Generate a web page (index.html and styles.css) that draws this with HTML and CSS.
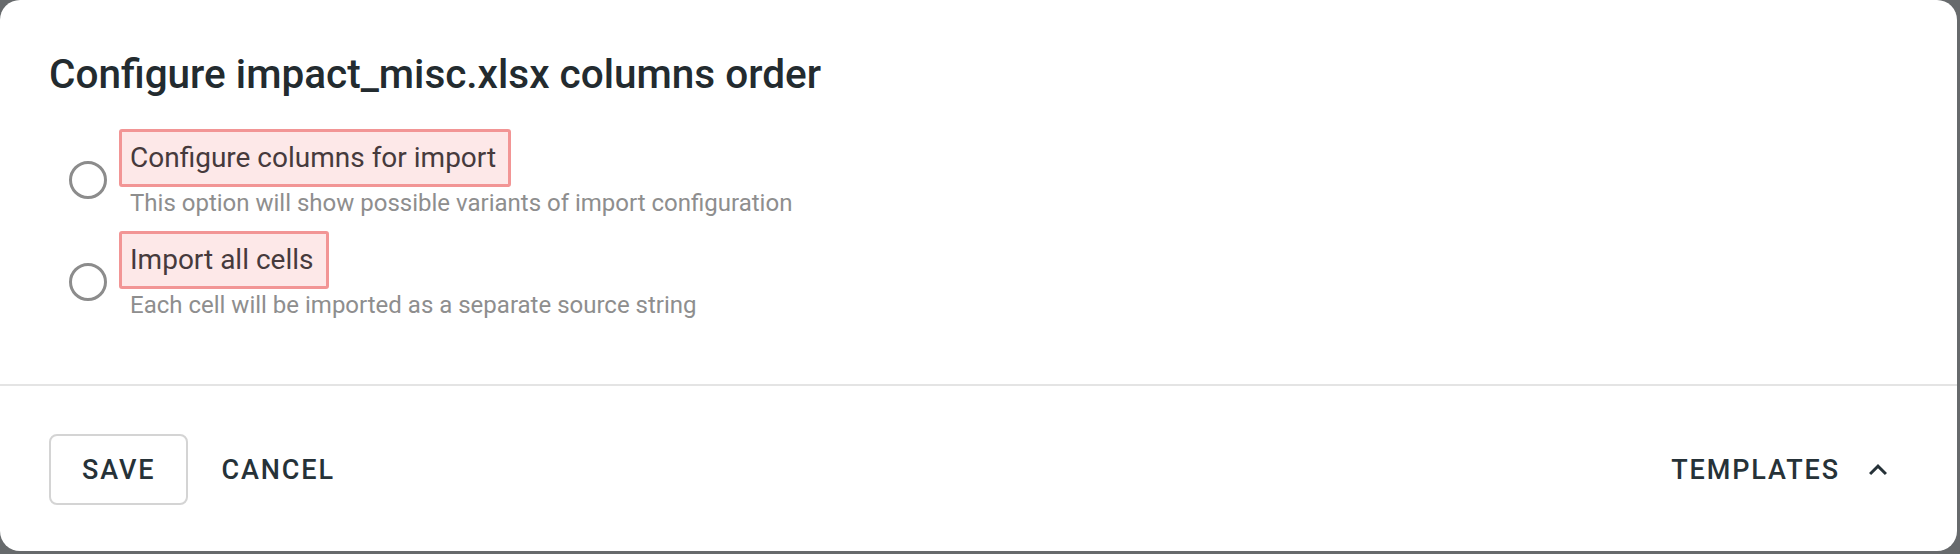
FILE: index.html
```html
<!DOCTYPE html>
<html lang="en">

<head>
    <meta charset="UTF-8">
    <meta name="viewport" content="width=device-width, initial-scale=1.0">
    <title>Configure columns order</title>
    <link rel="stylesheet" href="styles.css">
</head>

<body>
    <div class="dialog">
        <h2 class="dialog-title">Configure impact_misc.xlsx columns order</h2>
        <div class="options">
            <label class="option">
                <span class="radio"></span>
                <span class="option-text">
                    <span class="option-label">Configure columns for import</span>
                    <span class="option-hint">This option will show possible variants of import configuration</span>
                </span>
            </label>
            <label class="option">
                <span class="radio"></span>
                <span class="option-text">
                    <span class="option-label">Import all cells</span>
                    <span class="option-hint">Each cell will be imported as a separate source string</span>
                </span>
            </label>
        </div>
        <div class="dialog-actions">
            <div class="actions-left">
                <button type="button" class="btn btn-outlined">Save</button>
                <button type="button" class="btn">Cancel</button>
            </div>
            <button type="button" class="btn btn-templates">
                Templates
                <svg class="chevron" viewBox="0 0 24 24" width="36" height="36">
                    <path d="M12 8l-6 6 1.41 1.41L12 10.83l4.59 4.58L18 14z" fill="#263238"/>
                </svg>
            </button>
        </div>
    </div>
</body>

</html>
```

FILE: styles.css
```css
body {
    font-family: Roboto, "Liberation Sans", sans-serif;
    margin: 0;
    padding: 0;
    background-color: #676a6c;
    width: 1960px;
    height: 554px;
}

.dialog {
    width: 1957px;
    height: 551px;
    box-sizing: border-box;
    background: #fff;
    border-radius: 20px;
    padding-top: 50px;
}

.dialog-title {
    margin: 0 0 31px 49px;
    font-size: 40.5px;
    line-height: 48px;
    font-weight: 500;
    color: #232b2f;
}

.options {
    display: flex;
    flex-direction: column;
    gap: 12px;
    padding-left: 69px;
    padding-bottom: 63px;
    border-bottom: 2px solid #e4e4e4;
}

.option {
    display: flex;
    align-items: center;
    gap: 12px;
    cursor: pointer;
}

.radio {
    width: 38px;
    height: 38px;
    box-sizing: border-box;
    border: 3px solid #8c8c8c;
    border-radius: 50%;
    margin-top: 12px;
}

.option-text {
    display: flex;
    flex-direction: column;
    align-items: flex-start;
}

.option-label {
    height: 58px;
    box-sizing: border-box;
    line-height: 52px;
    padding: 0 12px 0 8px;
    font-size: 28px;
    color: #463a3c;
    background-color: #fde8e8;
    border: 3px solid #f29595;
    border-radius: 3px;
}

.option-hint {
    padding-left: 11px;
    font-size: 24px;
    line-height: 32px;
    color: #8e8e8e;
}

.dialog-actions {
    display: flex;
    justify-content: space-between;
    align-items: center;
    padding: 48px 37px 0 49px;
}

.actions-left {
    display: flex;
}

.btn {
    height: 71px;
    box-sizing: border-box;
    padding: 0 31px;
    background: none;
    border: 2px solid transparent;
    border-radius: 8px;
    font-family: Roboto, "Liberation Sans", sans-serif;
    font-size: 27px;
    font-weight: 500;
    letter-spacing: 1.9px;
    text-transform: uppercase;
    color: #263238;
    cursor: pointer;
}

.btn-outlined {
    border-color: #d4d4d4;
}

.btn-templates {
    display: flex;
    align-items: center;
    gap: 20px;
    padding: 0 22px 0 32px;
}

.chevron {
    display: block;
}
```
